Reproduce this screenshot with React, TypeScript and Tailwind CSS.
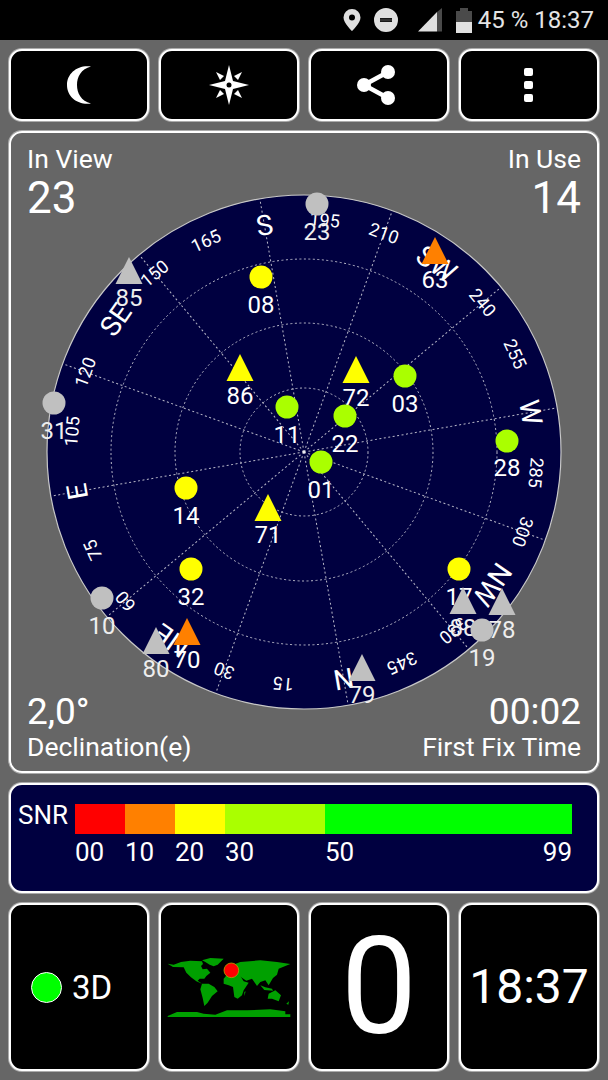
const CX = 304;
const CY = 452;
const NORTH = 170.1;

const YELLOW = '#ffff00';
const LIME = '#aaff00';
const ORANGE = '#ff8000';
const GRAY = '#c0c0c0';

type Sat = { id: string; x: number; y: number; ly: number; color: string; tri?: boolean };

// drawn in this order, later ones cover earlier ones
const sats: Sat[] = [
  { id: '23', x: 317, y: 204, ly: 232, color: GRAY },
  { id: '08', x: 261, y: 277, ly: 305, color: YELLOW },
  { id: '85', x: 129, y: 284, ly: 298, color: GRAY, tri: true },
  { id: '86', x: 240, y: 381, ly: 396, color: YELLOW, tri: true },
  { id: '72', x: 356, y: 383, ly: 398, color: YELLOW, tri: true },
  { id: '11', x: 287, y: 407, ly: 435, color: LIME },
  { id: '03', x: 405, y: 376, ly: 404, color: LIME },
  { id: '22', x: 345, y: 416, ly: 444, color: LIME },
  { id: '28', x: 507, y: 441, ly: 468, color: LIME },
  { id: '63', x: 435, y: 264, ly: 280, color: ORANGE, tri: true },
  { id: '31', x: 54, y: 403, ly: 431, color: GRAY },
  { id: '01', x: 321, y: 462, ly: 490, color: LIME },
  { id: '14', x: 186, y: 488, ly: 516, color: YELLOW },
  { id: '71', x: 268, y: 521, ly: 535, color: YELLOW, tri: true },
  { id: '32', x: 191, y: 569, ly: 597, color: YELLOW },
  { id: '10', x: 102, y: 598, ly: 626, color: GRAY },
  { id: '70', x: 187, y: 645, ly: 660, color: ORANGE, tri: true },
  { id: '80', x: 156, y: 654, ly: 669, color: GRAY, tri: true },
  { id: '17', x: 459, y: 569, ly: 597, color: YELLOW },
  { id: '88', x: 463, y: 614, ly: 628, color: GRAY, tri: true },
  { id: '78', x: 502, y: 615, ly: 630, color: GRAY, tri: true },
  { id: '19', x: 482, y: 630, ly: 658, color: GRAY },
  { id: '79', x: 362, y: 681, ly: 695, color: GRAY, tri: true },
];

const degrees = [15, 30, 60, 75, 105, 120, 150, 165, 195, 210, 240, 255, 285, 300, 330, 345];
const compass = [
  { t: 'N', a: 0 },
  { t: 'NE', a: 45 },
  { t: 'E', a: 90 },
  { t: 'SE', a: 135 },
  { t: 'S', a: 180 },
  { t: 'SW', a: 225 },
  { t: 'W', a: 270 },
  { t: 'NW', a: 315 },
];

function SkyPlot() {
  return (
    <svg viewBox="11 133 586 638" className="block w-[586px] h-[638px]">
      <circle cx={CX} cy={CY} r={257} fill="#000040" stroke="#c8c8c8" strokeWidth="1.2" />
      {[64, 129, 193].map((r) => (
        <circle key={r} cx={CX} cy={CY} r={r} fill="none" stroke="#b8b8c8" strokeWidth="1" strokeDasharray="2 2.5" />
      ))}
      {Array.from({ length: 12 }, (_, i) => (
        <line
          key={i}
          x1={CX}
          y1={CY}
          x2={CX}
          y2={CY - 256}
          stroke="#b8b8c8"
          strokeWidth="1"
          strokeDasharray="2 2.5"
          transform={`rotate(${NORTH + i * 30} ${CX} ${CY})`}
        />
      ))}
      <circle cx={CX} cy={CY} r={1} fill="#ffffff" />
      {degrees.map((d) => (
        <text
          key={d}
          x={CX}
          y={CY - 233}
          fill="#ffffff"
          fontSize="18"
          textAnchor="middle"
          dominantBaseline="central"
          transform={`rotate(${NORTH + d} ${CX} ${CY})`}
        >
          {d}
        </text>
      ))}
      {compass.map((c) => (
        <text
          key={c.t}
          x={CX}
          y={CY - 230}
          fill="#ffffff"
          fontSize="28"
          textAnchor="middle"
          dominantBaseline="central"
          transform={`rotate(${NORTH + c.a} ${CX} ${CY})`}
        >
          {c.t}
        </text>
      ))}
      {sats.map((s) => (
        <g key={s.id}>
          {s.tri ? (
            <polygon points={`${s.x},${s.y - 27} ${s.x + 13.5},${s.y} ${s.x - 13.5},${s.y}`} fill={s.color} />
          ) : (
            <circle cx={s.x} cy={s.y} r={11.5} fill={s.color} />
          )}
          <text
            x={s.x}
            y={s.ly}
            fill={s.color === GRAY ? '#eeeeee' : '#ffffff'}
            fontSize="24"
            textAnchor="middle"
            dominantBaseline="central"
          >
            {s.id}
          </text>
        </g>
      ))}
    </svg>
  );
}

function WorldMap() {
  return (
    <svg viewBox="20 35 372 183" className="w-[124px] h-[61px]">
      <g fill="#00a000">
        <polygon points="22,55 40,58 62,50 90,46 125,48 128,56 122,62 127,72 140,70 150,82 138,92 132,100 118,100 112,106 125,115 108,108 92,96 78,82 70,66 38,65" />
        <polygon points="125,45 150,38 190,40 172,58 160,63 148,58 135,50" />
        <polygon points="125,115 145,115 162,125 172,138 155,152 142,172 132,182 127,158 120,132" />
        <polygon points="190,100 200,88 240,92 250,108 265,112 250,135 245,150 232,160 222,155 218,125 205,120 190,115" />
        <polygon points="195,75 215,60 240,50 300,45 350,50 390,56 375,62 355,70 350,88 338,98 325,120 315,105 300,110 290,122 275,100 258,106 240,94 215,90 195,85" />
        <polygon points="300,120 315,126 335,130 338,136 312,134" />
        <polygon points="325,145 345,135 362,150 355,168 335,160 322,160" />
        <polygon points="22,212 50,200 110,200 130,205 165,208 200,195 260,195 330,192 375,198 375,207 390,207 390,215 22,215" />
        <polygon points="378,175 386,168 384,178" />
        <polygon points="252,140 256,138 252,152" />
      </g>
      <circle cx="213" cy="75" r="22" fill="#ff0000" stroke="#b0a000" strokeWidth="2.5" />
    </svg>
  );
}

const btn = 'flex items-center justify-center bg-black border-2 border-white rounded-[13px] shadow-[0_0_0_1px_rgba(255,255,255,0.45)]';

export default function App() {
  return (
    <div className="w-[608px] h-[1080px] bg-[#666666] flex flex-col font-['Roboto',sans-serif] text-white overflow-hidden">
      <div className="h-10 bg-black flex items-center justify-end pr-[14px]">
        <svg viewBox="0 0 18 22" className="w-[18px] h-[22px] mr-[13px]">
          <path fillRule="evenodd" fill="#e0e0e0" d="M9 0a8.5 8.5 0 0 1 8.5 8.5C17.5 14 9 22 9 22S.5 14 .5 8.5A8.5 8.5 0 0 1 9 0zm0 5.5a3 3 0 1 0 0 6 3 3 0 0 0 0-6z" />
        </svg>
        <svg viewBox="0 0 24 24" className="w-6 h-6 mr-[20px]">
          <path fillRule="evenodd" fill="#e0e0e0" d="M12 0a12 12 0 1 1 0 24 12 12 0 0 1 0-24zM6 10v4h12v-4z" />
          <rect x="6" y="10.5" width="12" height="3" fill="#333333" />
        </svg>
        <svg viewBox="0 0 24 24" className="w-6 h-6 mr-[14px]">
          <polygon points="0,23.5 19,4 19,23.5" fill="#e0e0e0" />
          <polygon points="19,4 24,0 24,23.5 19,23.5" fill="#4a4a4a" />
        </svg>
        <div className="w-4 h-[25px] flex flex-col items-center mr-[6px]">
          <div className="w-2 h-[3px] bg-[#4a4a4a]" />
          <div className="w-4 flex-1 bg-[#4a4a4a]" />
          <div className="w-4 h-[11px] bg-[#e0e0e0]" />
        </div>
        <span className="text-[24px] leading-none text-[#e4e4e4]">45 % 18:37</span>
      </div>

      <div className="grid grid-cols-4 gap-[10px] px-[9px] pt-[9px]">
        <button className={`${btn} h-[72px]`}>
          <svg viewBox="0 0 24 38" className="w-6 h-[38px]">
            <path fill="#ffffff" d="M24 0.5C14 3 10 11 10 19s4 16 14 18.5C11 39.5 0 31 0 19S11-1.5 24 .5z" />
          </svg>
        </button>
        <button className={`${btn} h-[72px]`}>
          <svg viewBox="-20 -20 40 40" className="w-10 h-10">
            <polygon fill="#ffffff" points="0,-20 4,-4 20,0 4,4 0,20 -4,4 -20,0 -4,-4" />
            <polygon fill="#ffffff" points="-13,-13 -5,-9 -9,-5" />
            <polygon fill="#ffffff" points="13,-13 9,-5 5,-9" />
            <polygon fill="#ffffff" points="-13,13 -9,5 -5,9" />
            <polygon fill="#ffffff" points="13,13 5,9 9,5" />
            <circle r="2.5" fill="#000000" />
          </svg>
        </button>
        <button className={`${btn} h-[72px]`}>
          <svg viewBox="0 0 38 40" className="w-[38px] h-10 mr-[6px]">
            <path d="M31 7 7 20l24 13" fill="none" stroke="#ffffff" strokeWidth="4.5" />
            <circle cx="7" cy="20" r="7" fill="#ffffff" />
            <circle cx="31" cy="7" r="7" fill="#ffffff" />
            <circle cx="31" cy="33" r="7" fill="#ffffff" />
          </svg>
        </button>
        <button className={`${btn} h-[72px]`}>
          <div className="flex flex-col gap-[5px] mr-[2px]">
            <div className="w-[9px] h-[8px] bg-white rounded-[2px]" />
            <div className="w-[9px] h-[8px] bg-white rounded-[2px]" />
            <div className="w-[9px] h-[8px] bg-white rounded-[2px]" />
          </div>
        </button>
      </div>

      <div className="relative mx-[9px] mt-[10px] h-[642px] border-2 border-white rounded-[13px] shadow-[0_0_0_1px_rgba(255,255,255,0.45)]">
        <SkyPlot />
        <div className="absolute left-[16px] top-[12px]">
          <div className="text-[26.5px] leading-[28px]">In View</div>
          <div className="text-[44px] leading-[48px] mt-[1px]">23</div>
        </div>
        <div className="absolute right-[16px] top-[12px] text-right">
          <div className="text-[26.5px] leading-[28px]">In Use</div>
          <div className="text-[44px] leading-[48px] mt-[1px]">14</div>
        </div>
        <div className="absolute left-[16px] bottom-[10px]">
          <div className="text-[37px] leading-[42px]">2,0°</div>
          <div className="text-[26.5px] leading-[28px]">Declination(e)</div>
        </div>
        <div className="absolute right-[16px] bottom-[10px] text-right">
          <div className="text-[37px] leading-[42px]">00:02</div>
          <div className="text-[26.5px] leading-[28px]">First Fix Time</div>
        </div>
      </div>

      <div className="mx-[9px] mt-[10px] h-[110px] bg-[#000040] border-2 border-white rounded-[13px] shadow-[0_0_0_1px_rgba(255,255,255,0.45)] pl-[7px] pt-[19px] flex">
        <div className="w-[57px] text-[26px] leading-[24px] mt-[-1px]">SNR</div>
        <div className="w-[497px]">
          <div className="flex h-[30px]">
            <div className="w-[50px] bg-[#ff0000]" />
            <div className="w-[50px] bg-[#ff8000]" />
            <div className="w-[50px] bg-[#ffff00]" />
            <div className="w-[100px] bg-[#aaff00]" />
            <div className="flex-1 bg-[#00ff00]" />
          </div>
          <div className="flex text-[26px] leading-[28px] mt-[4px]">
            <div className="w-[50px]">00</div>
            <div className="w-[50px]">10</div>
            <div className="w-[50px]">20</div>
            <div className="w-[100px]">30</div>
            <div className="flex-1 flex justify-between">
              <span>50</span>
              <span>99</span>
            </div>
          </div>
        </div>
      </div>

      <div className="grid grid-cols-4 gap-[10px] px-[9px] mt-[10px]">
        <div className={`${btn} h-[168px] !justify-start pl-5 gap-[10px]`}>
          <div className="w-[31px] h-[31px] rounded-full bg-[#00ff00] border border-white" />
          <span className="text-[33px] leading-none">3D</span>
        </div>
        <div className={`${btn} h-[168px]`}>
          <WorldMap />
        </div>
        <div className={`${btn} h-[168px]`}>
          <span className="text-[136px] leading-none">0</span>
        </div>
        <div className={`${btn} h-[168px]`}>
          <span className="text-[48px] leading-none">18:37</span>
        </div>
      </div>
    </div>
  );
}
